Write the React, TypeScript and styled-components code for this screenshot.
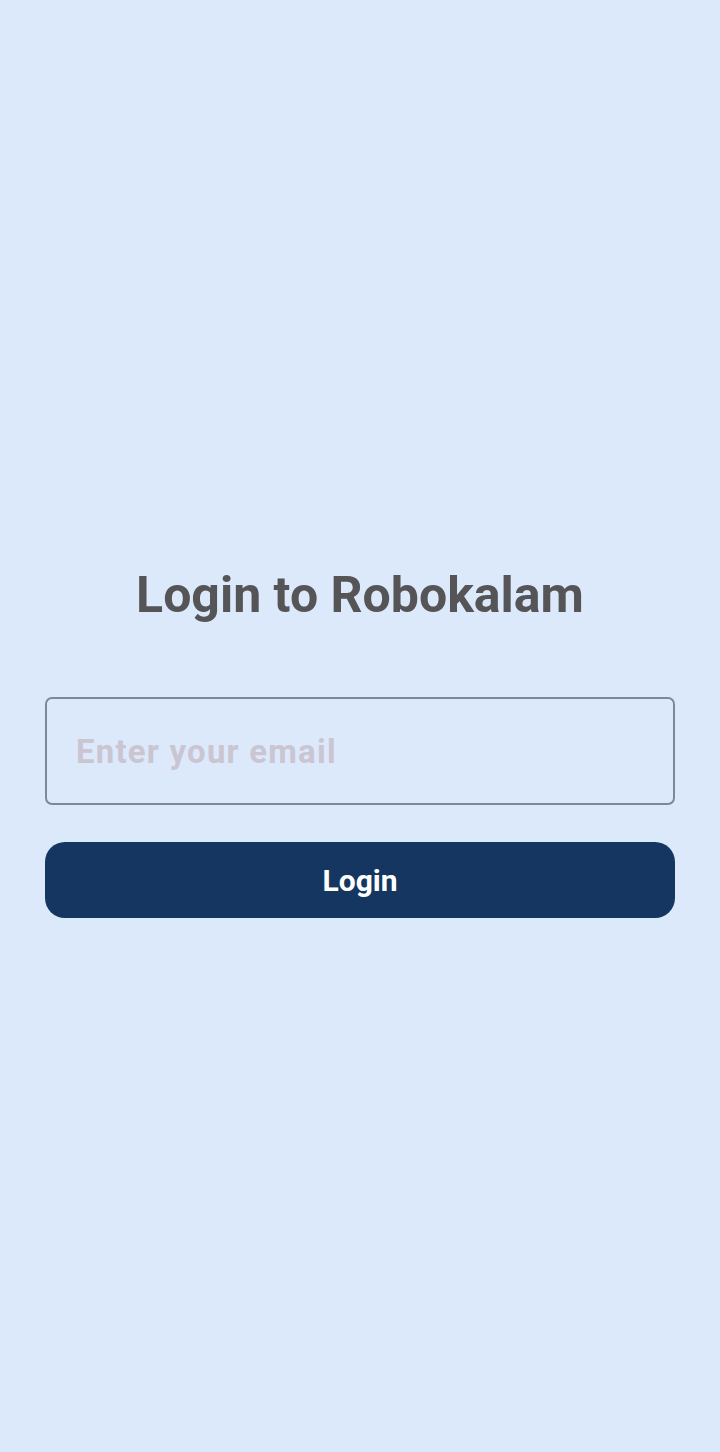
import React from "react";
import styled, { createGlobalStyle } from "styled-components";

const Global = createGlobalStyle`
  html, body { margin: 0; padding: 0; background: #dbe9fb; }
  body { font-family: Roboto, "Noto Sans", sans-serif; }
  * { box-sizing: border-box; }
`;

const Page = styled.div`
  width: 720px;
  height: 1452px;
  background: #dbe9fb;
  display: flex;
  flex-direction: column;
  padding: 565px 45px 0;
`;

const Title = styled.h1`
  margin: 0;
  text-align: center;
  font-family: Roboto, sans-serif;
  font-weight: 700;
  font-size: 50px;
  line-height: 60px;
  color: #555558;
`;

const EmailInput = styled.input`
  margin-top: 72px;
  width: 100%;
  height: 108px;
  border: 2px solid #7c8999;
  border-radius: 7px;
  background: transparent;
  padding: 0 29px;
  font-family: Roboto, sans-serif;
  font-weight: 700;
  font-size: 33px;
  letter-spacing: 1.2px;
  color: #333;
  outline: none;
  &::placeholder {
    color: #cbc5d2;
  }
`;

const LoginButton = styled.button`
  margin-top: 37px;
  width: 100%;
  height: 76px;
  border: none;
  border-radius: 20px;
  background: #143660;
  color: #ffffff;
  font-family: Roboto, sans-serif;
  font-weight: 700;
  font-size: 30px;
  cursor: pointer;
`;

export default function App() {
  return (
    <>
      <Global />
      <Page>
        <Title>Login to Robokalam</Title>
        <EmailInput type="email" placeholder="Enter your email" />
        <LoginButton>Login</LoginButton>
      </Page>
    </>
  );
}
